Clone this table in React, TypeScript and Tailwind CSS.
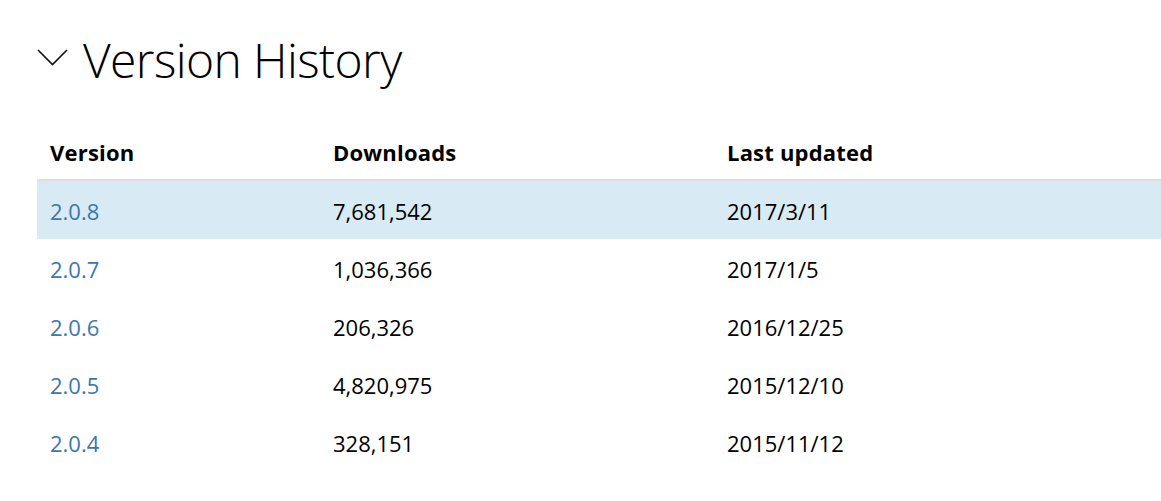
import React from "react";

const rows = [
  { v: "2.0.8", d: "7,681,542", u: "2017/3/11", active: true },
  { v: "2.0.7", d: "1,036,366", u: "2017/1/5" },
  { v: "2.0.6", d: "206,326", u: "2016/12/25" },
  { v: "2.0.5", d: "4,820,975", u: "2015/12/10" },
  { v: "2.0.4", d: "328,151", u: "2015/11/12" },
];

export default function App() {
  return (
    <div
      className="w-[1161px] h-[501px] bg-white overflow-hidden text-black"
      style={{ fontFamily: '"Open Sans", "Noto Sans", sans-serif' }}
    >
      <div className="pl-[37px] pt-[36px] flex items-center h-[84px]">
        <svg width="31" height="17" viewBox="0 0 31 17" className="mt-[-5px]">
          <path d="M1 1 L15.5 15.5 L30 1" fill="none" stroke="#111" strokeWidth="1.6" />
        </svg>
        <h1 className="ml-[15px] text-[48px] leading-[48px] h-[48px] font-light tracking-[-0.6px]">
          Version History
        </h1>
      </div>
      <div className="ml-[37px] mt-[41px]">
        <div className="grid grid-cols-[283px_394px_1fr] h-[56px] items-center border-b-2 border-[#e1dde0] text-[22px] font-bold tracking-[0.2px]">
          <div className="pl-[13px]">Version</div>
          <div className="pl-[13px]">Downloads</div>
          <div className="pl-[13px]">Last updated</div>
        </div>
        {rows.map((r) => (
          <div
            key={r.v}
            className={`grid grid-cols-[283px_394px_1fr] h-[58px] items-center text-[22px] ${
              r.active ? "bg-[#d8eaf4]" : ""
            }`}
          >
            <div className="pl-[13px] text-[#3b77ad] pt-[2px]">{r.v}</div>
            <div className="pl-[13px] pt-[2px]">{r.d}</div>
            <div className="pl-[13px] pt-[2px]">{r.u}</div>
          </div>
        ))}
      </div>
    </div>
  );
}
